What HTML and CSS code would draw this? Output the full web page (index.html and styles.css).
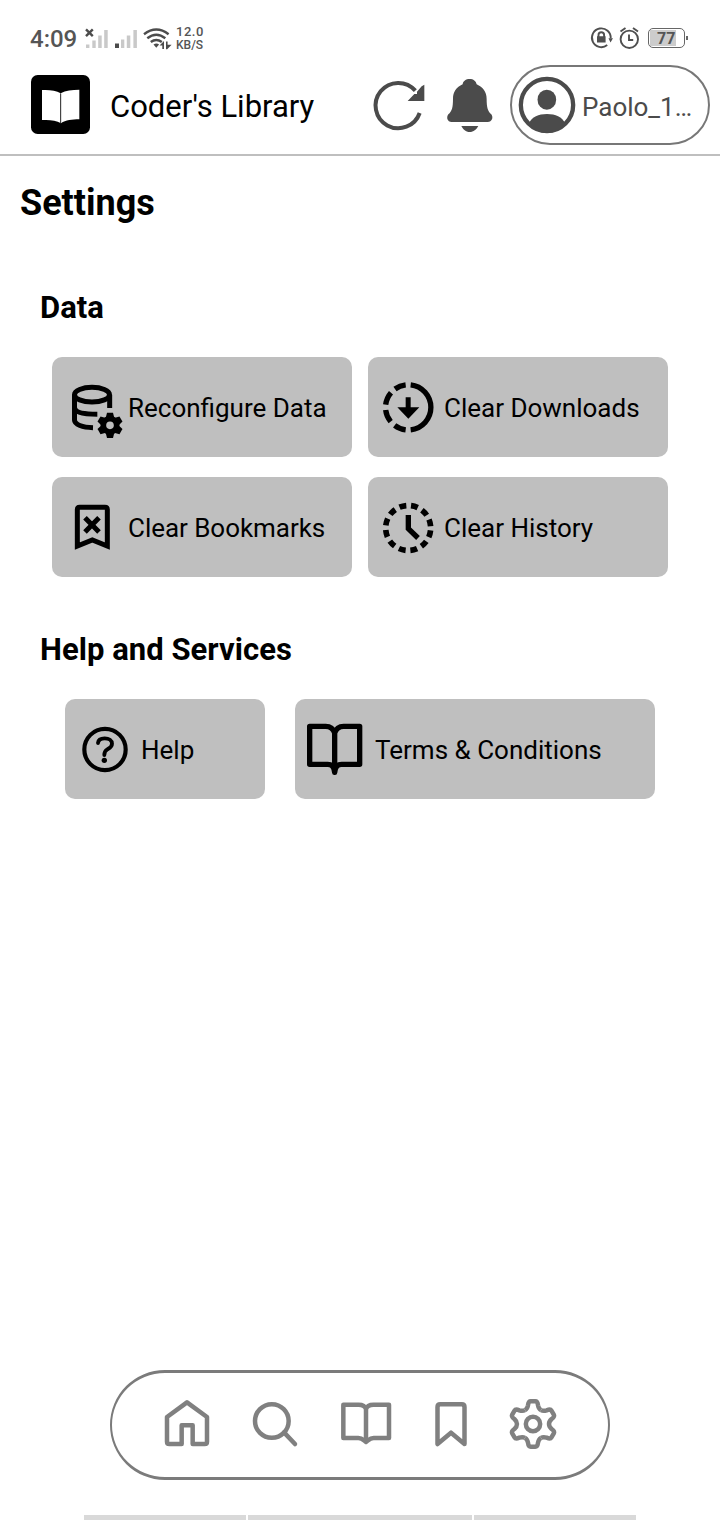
FILE: index.html
```html
<!DOCTYPE html>
<html lang="en">
<head>
<meta charset="utf-8">
<title>Coder's Library - Settings</title>
<link rel="stylesheet" href="styles.css">
</head>
<body>
<div class="screen">
  <div class="status">
    <span class="time">4:09</span>
    <svg class="signals" viewBox="84 24 90 30">
      <g fill="#c9c9c9"><path d="M86 44.5h3.4V48H86zM92.3 40.5h3.4V48h-3.4zM98.2 35.5h3.5V48h-3.5zM104.2 30h3.5v18h-3.5zM121 39.5h3.3V48H121zM126.8 35.5h3.5V48h-3.5zM133.4 30h3.5v18h-3.5z"/></g>
      <path d="M115 43.5h4V48h-4z" fill="#4c4c4c"/>
      <g fill="none" stroke="#4c4c4c" stroke-width="2.4">
        <path d="M86 29.3l6.8 6.8M92.800 29.3l-6.800 6.800"/>
        <path d="M144 34.2q12.3-9.4 24.6 0M147.3 38.2q9-7 18 0M150.8 42q5.5-4.2 11 0"/>
      </g>
      <path d="M153.5 44.5q3-2 5.6 0l-2.8 3.2zM159.5 45.5l4.5-4.5v8h-1.700v-3.500zM166 41.5h1.600v3.200h4l-4.400 4.500H166z" fill="#4c4c4c"/>
    </svg>
    <div class="speed"><span class="rate">12.0</span><span class="unit">KB/S</span></div>
    <svg class="indicators" viewBox="588 24 56 28">
      <g fill="none" stroke="#4f4f4f" stroke-width="1.9">
        <path d="M607.2 45.1A9.4 9.4 0 1 1 610.7 38.4"/>
        <path d="M598.5 37v-2a2.8 2.8 0 0 1 5.6 0v2"/>
        <circle cx="629.3" cy="39.3" r="8.7"/>
        <path d="M629 34.5V40h4.2M620.5 31.5l5-3.5M638 31.5l-5-3.5"/>
      </g>
      <path d="M597 36.3h8.6v6.3H597zM608.5 38.2h4.5l-2.5 4.3z" fill="#4f4f4f"/>
    </svg>
    <div class="battery"><span class="level">77</span></div><i class="nub"></i>
  </div>

  <header class="header">
    <svg class="logo" viewBox="33 44 177 177">
      <rect x="33" y="44" width="177" height="177" rx="20"/>
      <path d="M66 89C88 88 108 90 122 99C137 90 156 88 178 88V177C156 177 137 179 123 189C108 179 88 178 66 179Z" fill="#fff"/>
      <path d="M122 99V188" stroke="#222" stroke-width="3"/>
    </svg>
    <h1 class="brand">Coder's Library</h1>
    <svg class="refresh" viewBox="36 54 165 165">
      <path d="M166 92A68 68 0 1 0 179 159" fill="none" stroke="#4b4b4b" stroke-width="12"/>
      <path d="M193 74V123H143L163 102L171 102V95L185 79Z" fill="#4b4b4b"/>
    </svg>
    <svg class="bell" viewBox="258 54 142 165">
      <path d="M308 73C309 63 318 57 329 57S348 63 350 73C369 82 380 96 380 116C380 144 384 154 394 163C401 173 396 186 383 186H275C262 186 258 173 265 163C276 153 279 143 279 116C279 96 289 82 308 73ZM304 198H355C349 209 341 216 329 216S310 209 304 198Z" fill="#4b4b4b"/>
    </svg>
    <div class="profile">
      <svg class="avatar" viewBox="54 61 174 174">
        <circle cx="141" cy="148" r="78.500" fill="none" stroke="#4b4b4b" stroke-width="13"/>
        <ellipse cx="140.500" cy="132" rx="28" ry="30" fill="#4b4b4b"/>
        <path d="M87 202C96 184 115 175 141 175S186 184 195 202C179 224 162 232 141 232S102 224 87 202Z" fill="#4b4b4b"/>
      </svg>
      <span class="username">Paolo_1…</span>
    </div>
  </header>

  <main class="content">
    <h2 class="page-title">Settings</h2>
    <h3 class="section-title data-title">Data</h3>
    <div class="grid">
      <div class="card">
        <svg class="card-icon" viewBox="21 21 210 300">
          <g fill="none" stroke="#000" stroke-width="15">
            <ellipse cx="141" cy="134" rx="52.500" ry="22"/>
            <path d="M88.500 134V210C88.500 224 113 232 144 233M194 134V174M88.500 172C88.500 187 113 193 157 193"/>
          </g>
          <g transform="translate(195 226)">
            <circle r="20" fill="none" stroke="#000" stroke-width="17"/>
            <path id="cog" d="M-13-22L-9-38H9L13-22Z"/>
            <use href="#cog" transform="rotate(60)"/><use href="#cog" transform="rotate(120)"/><use href="#cog" transform="rotate(180)"/><use href="#cog" transform="rotate(240)"/><use href="#cog" transform="rotate(300)"/>
          </g>
        </svg>
        <span>Reconfigure Data</span>
      </div>
      <div class="card">
        <svg class="card-icon" viewBox="24 21 210 300">
          <g fill="none" stroke="#000" stroke-width="16">
            <path d="M152 104.400A68 68 0 0 1 152 239.600"/>
            <path d="M137 104.400A68 68 0 0 0 105 117M93 128A68 68 0 0 0 77 164M77 180A68 68 0 0 0 92 215M104 226A68 68 0 0 0 137 239.600"/>
          </g>
          <path d="M137 142H152V172H178L145 206L112 172H137Z"/>
        </svg>
        <span>Clear Downloads</span>
      </div>
      <div class="card">
        <svg class="card-icon" viewBox="21 381 210 300">
          <path d="M97 588V479Q97 472 104 472H180Q187 472 187 479V588L142 570Z" fill="none" stroke="#000" stroke-width="15"/>
          <path d="M120 503L162 546M162 503L120 546" stroke="#000" stroke-width="15"/>
        </svg>
        <span class="snug">Clear Bookmarks</span>
      </div>
      <div class="card">
        <svg class="card-icon" viewBox="24 381 210 300">
          <circle cx="144.500" cy="534" r="67.500" fill="none" stroke="#000" stroke-width="17" pathLength="144" stroke-dasharray="7 5" stroke-dashoffset="-2.500"/>
          <path d="M145 495V536L174 564" fill="none" stroke="#000" stroke-width="16"/>
        </svg>
        <span>Clear History</span>
      </div>
    </div>
    <h3 class="section-title help-title">Help and Services</h3>
    <div class="services">
      <div class="card help">
        <svg class="card-icon" viewBox="30 27 210 300">
          <circle cx="150" cy="178.500" r="62" fill="none" stroke="#000" stroke-width="12.500"/>
          <path d="M129 159C130 149 138 145 149 145C162 145 171 151 171 161C171 171 164 174 157 178C150 182 148 186 148 195" fill="none" stroke="#000" stroke-width="11.500" stroke-linecap="round"/>
          <circle cx="148" cy="211" r="8"/>
        </svg>
        <span>Help</span>
      </div>
      <div class="card terms">
        <svg class="card-icon" viewBox="30 27 210 300">
          <path d="M149 247V129C145 116 136 109 122 109H74V223H128C141 223 147 230 149 247C151 230 157 223 170 223H224V109H176C162 109 153 116 149 129" fill="none" stroke="#000" stroke-width="16" stroke-linejoin="round"/>
        </svg>
        <span>Terms &amp; Conditions</span>
      </div>
    </div>
  </main>

  <nav class="nav">
    <svg viewBox="186 105 150 180"><path d="M261 127L201 171V245Q201 252 208 252H245V196H278V252H314Q321 252 321 245V171Z"/></svg>
    <svg viewBox="450 105 150 180"><circle cx="515.500" cy="183" r="50.500"/><path d="M552 217L585 252" stroke-linecap="round"/></svg>
    <svg viewBox="-27 105 150 180"><path d="M48 246V147C45 138 36 134 26 134H-20V234H25C35 234 40 240 48 246C56 240 61 234 71 234H117V134H70C60 134 51 138 48 147"/></svg>
    <svg viewBox="226.500 105 150 180"><path d="M261 252V141Q261 133 269 133H334Q342 133 342 141V252L301.500 218Z"/></svg>
    <svg viewBox="474 105 150 180">
      <g transform="translate(549 192)">
        <circle r="21.500"/>
        <path id="tooth" d="M-24-41.600C-17-45.600-16-51-15-56C-14-64-12-68-7-68H7C12-68 14-64 15-56C16-51 17-45.600 24-41.600"/>
        <use href="#tooth" transform="rotate(60)"/><use href="#tooth" transform="rotate(120)"/><use href="#tooth" transform="rotate(180)"/><use href="#tooth" transform="rotate(240)"/><use href="#tooth" transform="rotate(300)"/>
      </g>
    </svg>
  </nav>
  <div class="system-bar"><i></i><i class="wide"></i><i></i></div>
</div>
</body>
</html>
```
FILE: styles.css
```css
* { box-sizing: border-box; }
body { margin: 0; background: #fff; font-family: Roboto, "Liberation Sans", sans-serif; color: #000; }
h1, h2, h3 { margin: 0; }
svg { display: block; flex: none; overflow: visible; }
.screen { width: 720px; height: 1520px; display: flex; flex-direction: column; background: #fff; overflow: hidden; }

.status { height: 60px; padding: 24px 0 0 30px; display: flex; align-items: flex-start; color: #555; }
.time { width: 54px; font-size: 24px; line-height: 30px; font-weight: 500; white-space: nowrap; }
.signals { width: 90px; height: 30px; }
.speed { display: flex; flex-direction: column; width: 32px; margin: 1px 0 0 2px; font-weight: 500; white-space: nowrap; }
.rate { font-size: 13px; line-height: 14px; letter-spacing: 0.5px; }
.unit { font-size: 12px; line-height: 12px; }
.indicators { width: 56px; height: 28px; margin-left: 380px; }
.battery { width: 37px; height: 20px; margin: 4px 0 0 4px; border: 1.500px solid #666; border-radius: 5px; padding: 1px; }
.level { display: block; width: 26px; height: 16px; padding-left: 7px; background: #ccc; font-size: 16px; line-height: 17px; font-weight: 700; }
.nub { width: 2px; height: 4px; margin: 12px 0 0 1px; background: #666; }

.header { height: 96px; display: flex; align-items: flex-start; padding-left: 31px; border-bottom: 2px solid #bfbfbf; }
.logo { width: 59px; height: 59px; margin-top: 15px; }
.brand { width: 262px; padding-left: 20px; margin-top: 27px; font-size: 31px; line-height: 40px; font-weight: 400; white-space: nowrap; }
.refresh { width: 55px; height: 55px; margin: 18px 0 0 20px; }
.bell { width: 47.300px; height: 55px; margin: 18px 0 0 19px; }
.profile { width: 200px; height: 80px; margin: 5px 0 0 16.700px; display: flex; align-items: center; padding-left: 6px; border: 2px solid #777; border-radius: 40px; color: #4b4b4b; }
.avatar { width: 58px; height: 58px; }
.username { margin-left: 6px; padding-top: 3px; font-size: 26px; line-height: 30px; white-space: nowrap; }

.content { height: 1214px; }
.page-title { padding: 26px 0 0 20px; font-size: 36px; line-height: 42px; font-weight: 700; }
.section-title { padding-left: 40px; font-size: 31px; line-height: 36px; font-weight: 700; }
.data-title { margin-top: 66px; }
.help-title { margin-top: 55px; letter-spacing: 0.04px; }
.grid { display: grid; grid-template-columns: 300px 300px; grid-auto-rows: 100px; gap: 20px 16px; margin: 31px 0 0 52px; }
.services { display: flex; gap: 30px; margin: 31px 0 0 65px; }
.card { height: 100px; display: flex; align-items: center; background: #bfbfbf; border-radius: 10px; font-size: 26px; white-space: nowrap; }
.card-icon { width: 70px; height: 100px; }
.card span { margin-left: 6px; padding-top: 2px; }
.card .snug { letter-spacing: -0.04px; }
.help { width: 200px; }
.terms { width: 360px; }
.terms span { margin-left: 10px; }

.nav { width: 500px; height: 110px; margin-left: 110px; display: grid; grid-template-columns: 88px 88px 94px 75px 90px; align-items: center; justify-items: center; padding-left: 31px; border: solid #7b7b7b; border-width: 3px 2px; border-radius: 55px; }
.nav svg { width: 50px; height: 60px; fill: none; stroke: #808080; stroke-width: 13.500px; stroke-linejoin: round; }
.system-bar { display: flex; gap: 2px; height: 5px; margin: 35px 0 0 84px; }
.system-bar i { width: 162px; background: #d9d9d9; }
.system-bar .wide { width: 224px; }
```
